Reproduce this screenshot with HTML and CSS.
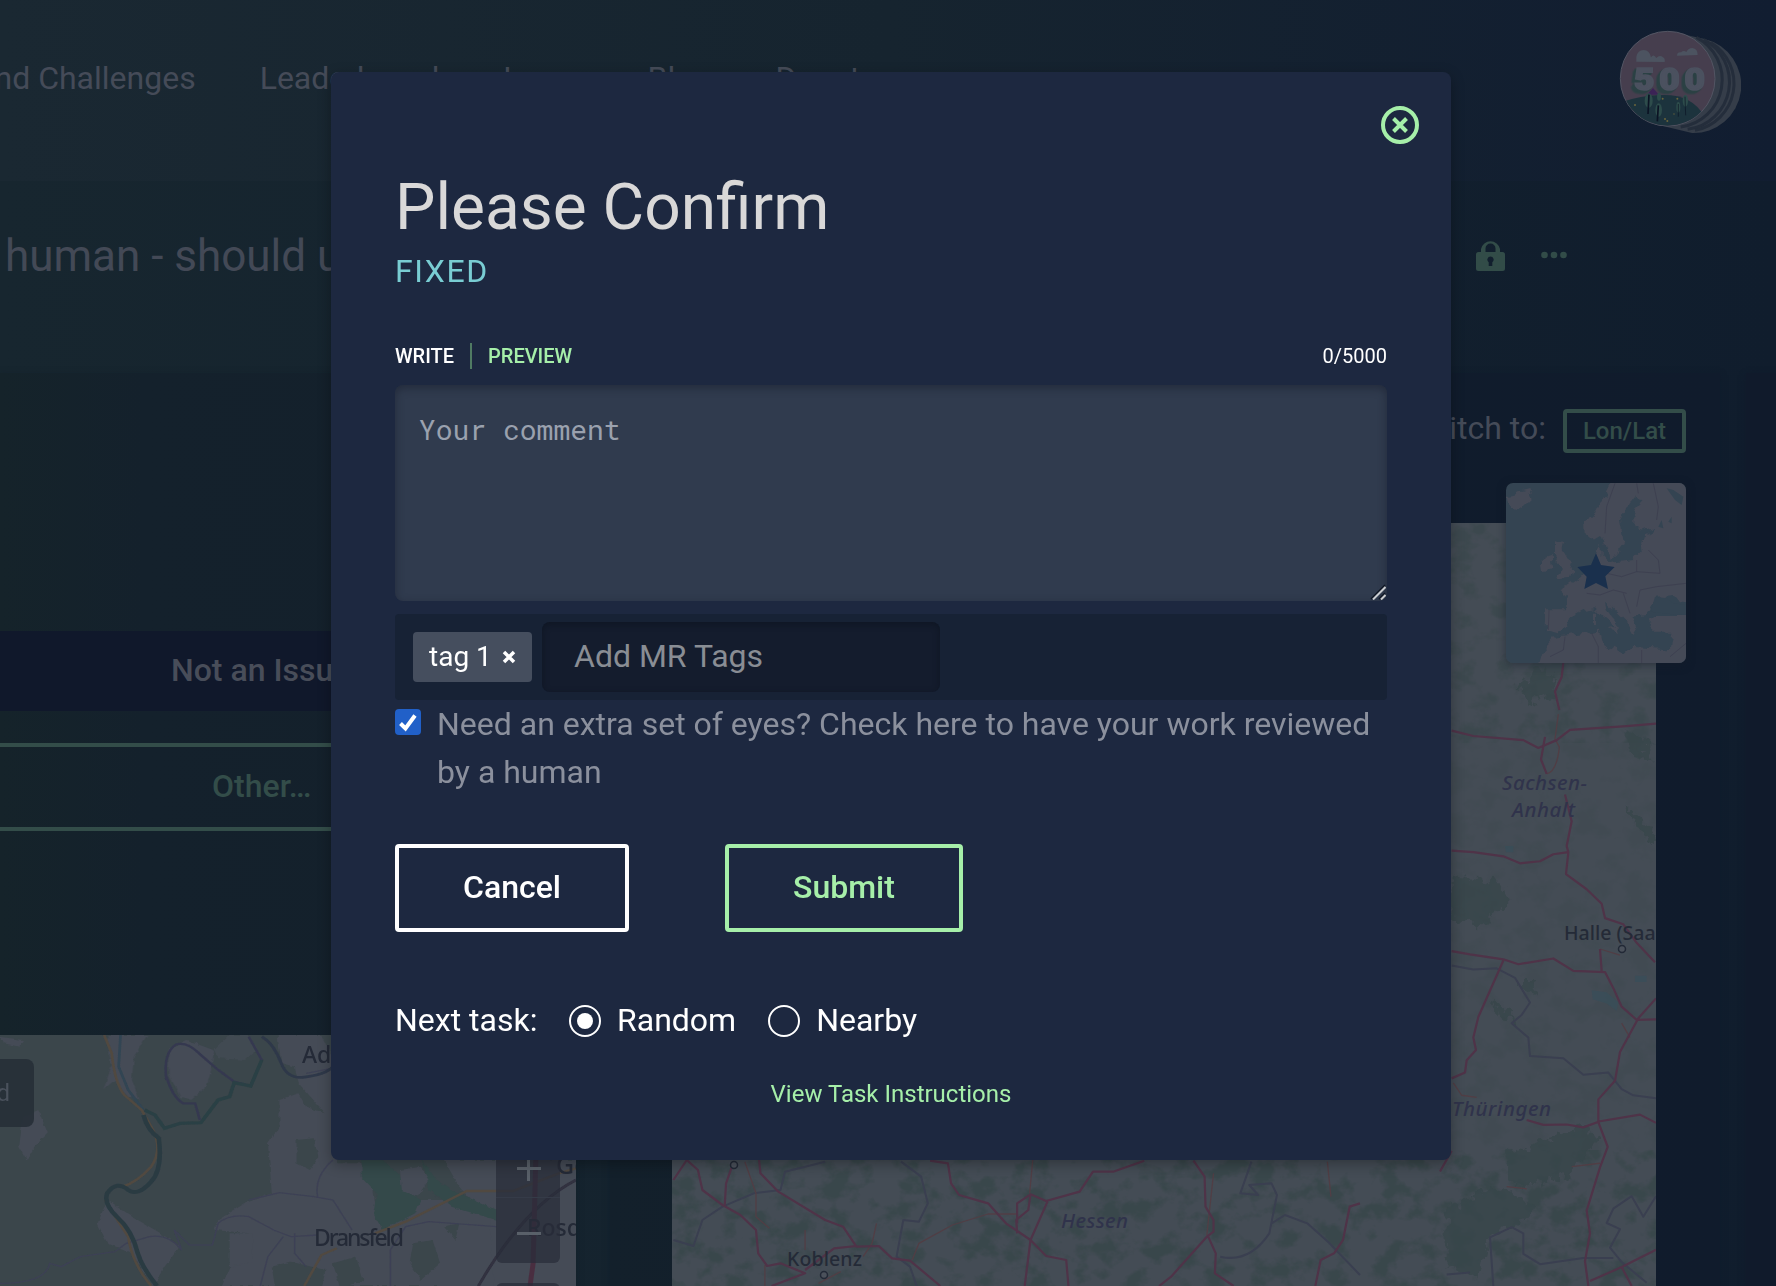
FILE: index.html
```html
<!DOCTYPE html>
<html lang="en">
<head>
<meta charset="utf-8">
<title>Please Confirm</title>
<link rel="stylesheet" href="styles.css">
</head>
<body>
<div class="page">
  <header class="topbar">
    <nav class="nav">
      <a>Find Challenges</a><a>Leaderboard</a><a>Learn</a><a>Blog</a><a>Donate</a>
    </nav>
    <svg class="badge" viewBox="958 90 366 312">
      <defs><clipPath id="disc"><circle cx="1104" cy="236" r="141"/></clipPath></defs>
      <g fill="#353d49">
        <path d="M1104 93L1215 117A143 143 0 0 1 1177 399L1080 376Z"/>
      </g>
      <g fill="none" stroke="#242d3b" stroke-width="9">
        <path d="M1190 112A143 143 0 0 1 1143 381"/>
        <path d="M1212 119A143 143 0 0 1 1164 388"/>
        <path d="M1234 128A143 143 0 0 1 1186 391"/>
      </g>
      <circle cx="1104" cy="236" r="142" fill="#463e4e" stroke="#525563" stroke-width="3"/>
      <g clip-path="url(#disc)">
        <path d="M1042 284L1060 264L1078 284Z" fill="#3b2356"/>
        <path d="M940 400V316Q1010 286 1090 285Q1180 284 1214 350V400Z" fill="#1c333d"/>
        <g fill="#2d4c4b"><ellipse cx="1047" cy="302" rx="12" ry="22"/><ellipse cx="1077" cy="330" rx="10" ry="20"/><ellipse cx="1136" cy="322" rx="6" ry="16"/><ellipse cx="1157" cy="302" rx="8" ry="18"/><ellipse cx="1078" cy="290" rx="6" ry="12"/></g>
        <g stroke="#0b1324" stroke-width="5"><path d="M1048 284L1045 342M1076 316L1073 364"/><path stroke-width="2" d="M1136 312V350M1156 290L1158 346"/></g>
        <g fill="#69643b"><circle cx="1006" cy="315" r="3"/><circle cx="1089" cy="296" r="3"/><circle cx="1133" cy="296" r="3"/><circle cx="1096" cy="357" r="3"/><circle cx="1103" cy="363" r="3"/><circle cx="1123" cy="342" r="2"/></g>
      </g>
      <g fill="#4c5360">
        <path d="M1010 185V170Q1014 151 1032 150Q1050 151 1054 172Q1062 160 1070 174Q1080 163 1090 172Q1097 176 1095 186Z"/>
        <path d="M1132 167Q1132 156 1144 157Q1152 149 1160 156Q1166 144 1178 144Q1194 146 1194 165Z"/>
      </g>
      <text class="badge-num" transform="translate(1003 271) scale(1.15 1)" textLength="185">500</text>
    </svg>
  </header>

  <section class="taskbar">
    <h2 class="task-title">human - should use</h2>
    <div class="task-tools">
      <svg class="lock" viewBox="0 0 29 32"><path fill-rule="evenodd" d="M5 13V10a9.700 9.700 0 0 1 19 0v3h2.500a2.500 2.500 0 0 1 2.500 2.500v14a2.500 2.500 0 0 1-2.500 2.500h-24A2.500 2.500 0 0 1 0 29.500v-14A2.500 2.500 0 0 1 2.500 13ZM9.500 13h10v-3.500a5 5 0 0 0-10 0ZM14.500 17.500a3.200 3.200 0 0 0-1.800 5.800v3.700h3.600v-3.700a3.200 3.200 0 0 0-1.800-5.800Z"/></svg>
      <svg class="dots" viewBox="0 0 26 8"><circle cx="3.500" cy="4" r="3.300"/><circle cx="13" cy="4" r="3.300"/><circle cx="22.500" cy="4" r="3.300"/></svg>
    </div>
  </section>

  <main class="columns">
    <div class="col-left">
      <div class="controls">
        <div class="btn-solid">Not an Issue</div>
        <div class="btn-outline">Other…</div>
      </div>
      <div class="map-left">
        <svg class="map-svg" viewBox="0 1035 576 251">
          <defs>
            <filter id="soft"><feGaussianBlur stdDeviation="0.8"/></filter>
            <filter id="ragged" color-interpolation-filters="sRGB"><feTurbulence type="fractalNoise" baseFrequency=".06" numOctaves="2" seed="3"/><feDisplacementMap in="SourceGraphic" xChannelSelector="R" yChannelSelector="G" scale="12"/><feGaussianBlur stdDeviation="0.7"/></filter>
          </defs>
          <rect y="1035" width="576" height="251" fill="#3b464b"/>
          <g transform="translate(0 1000) scale(.3827 .33333)" filter="url(#ragged)">
            <g fill="#454b56">
              <path d="M280 105H385L350 170L345 240L365 300L330 290L300 240L270 270L290 200Z"/>
              <path d="M440 150L490 120L560 150L550 220L540 260L500 300L470 290L440 220Z"/>
              <path d="M560 150L600 105H650L670 150L640 180L570 175Z" opacity=".7"/>
              <path d="M725 105H840L880 200V490H950L975 560L985 660L1005 690L1100 600L1160 600L1297 650V858H580L600 800L640 760L650 700L560 690L570 660L640 610L710 580L705 500L700 430L730 380V300L780 280L800 320L850 340L780 250L770 200L735 190Z"/>
              <path d="M0 110L60 120L50 140L10 130ZM60 350L100 330L125 400L90 440L70 480L50 440ZM280 600L330 640L420 700L470 740L430 800L400 858L345 760L280 730L255 670Z"/>
              <path d="M1160 480H1520V870H1290L1280 650L1230 600L1200 560Z"/>
              <path d="M600 700L660 700V790L600 800Z"/>
            </g>
            <g fill="#3b464b"><path d="M775 420L820 415L832 470L810 510L775 490ZM710 800L760 785L850 810L840 870H720ZM870 790L930 770L950 840L890 870ZM1080 730L1130 720L1150 790L1100 840L1070 790ZM1160 680L1200 670L1190 720Z"/></g>
            <g fill="#34494a"><path d="M945 480H1000L1040 520L1070 580L1100 600L1085 640L1000 690L975 640L985 580L945 530Z"/><path d="M1105 480L1140 540L1180 570L1297 630V660L1180 620L1120 570Z"/></g>
            <path fill="#454b56" d="M1045 510L1100 500L1120 540L1090 590L1050 570Z"/>
          </g>
          <g transform="translate(0 1000) scale(.3827 .33333)" filter="url(#soft)">
            <path d="M435 240Q425 160 460 133Q490 125 520 160L570 210L612 245L655 258L684 180L650 110M435 230Q450 290 478 310H510L522 360" stroke="#353950" stroke-width="7" fill="none"/>
            <path d="M0 850Q120 850 130 790L160 800L210 770L300 755L330 730L390 710Q440 700 475 750L455 690L495 735L555 735L570 670Q600 640 650 650L715 690L760 710L830 705M650 600L730 578L820 590L870 600L920 690M830 590Q820 530 870 480M770 700V760L800 800M680 858L700 770L740 710M1020 858V750L1060 680L1120 665L1297 680M890 200L800 220" class="r-violet"/>
            <path d="M315 105L310 200L335 270L375 330" stroke="#314553" stroke-width="7" fill="none"/>
            <path d="M684 110Q715 130 735 190Q750 235 790 232Q850 225 870 200" stroke="#2f3849" stroke-width="8" fill="none"/>
            <path d="M684 180L655 258L612 248L600 290L570 300L525 368L470 370L430 385L405 345L378 330" stroke="#2b4044" stroke-width="10" fill="none"/>
            <path d="M272 105L292 160Q300 250 325 285L370 330L400 390Q425 450 395 500Q360 545 320 560M275 600Q300 650 335 710Q345 790 395 858M795 858L840 765L880 745M980 700L1060 665L1220 573H1340L1460 520L1505 505" stroke="#514940" stroke-width="7" fill="none"/>
            <path d="M375 345Q385 390 415 415Q425 510 395 545Q360 590 335 570Q305 540 280 580Q270 610 305 650Q345 690 360 760Q370 800 410 858" stroke="#2a3b43" stroke-width="12" fill="none"/>
            <path d="M1250 858Q1370 620 1505 540" stroke="#30303f" stroke-width="8" fill="none"/>
            <path d="M1400 480L1393 790L1385 858" stroke="#4a2f41" stroke-width="13" fill="none"/>
          </g>
          <g class="town" font-size="23">
            <text x="302" y="1063">Adelebsen</text>
            <text x="302" y="1246" textLength="102" visibility="hidden"></text>
            <text x="314" y="1246" textLength="90">Dransfeld</text>
            <text x="556" y="1174" font-size="25">Göttingen</text>
            <text x="527" y="1236">Rosdorf</text>
          </g>
        </svg>
        <div class="map-chip">d</div>
        <div class="zoom-box"><span class="zoom-btn plus"></span><span class="zoom-btn"></span></div>
        <div class="zoom-box zoom-box-next"></div>
      </div>
    </div>

    <div class="col-right">
      <div class="switch-row"><span>Switch to:</span><span class="lonlat">Lon/Lat</span></div>
      <div class="map-right">
        <svg class="map-svg" viewBox="672 523 984 763">
          <defs>
            <filter id="woods" x="0" y="0" width="100%" height="100%" color-interpolation-filters="sRGB">
              <feTurbulence type="fractalNoise" baseFrequency="0.04 0.05" numOctaves="4" seed="8"/>
              <feColorMatrix values="0 0 0 0 .215  0 0 0 0 .275  0 0 0 0 .286  0 5 0 0 -2.400"/>
            </filter>
            <filter id="patch" color-interpolation-filters="sRGB"><feTurbulence type="fractalNoise" baseFrequency=".04" numOctaves="3" seed="5"/><feDisplacementMap in="SourceGraphic" xChannelSelector="R" yChannelSelector="G" scale="50"/><feGaussianBlur stdDeviation="1.500"/></filter>
          </defs>
          <rect x="672" y="523" width="984" height="763" fill="#444c55"/>
          <rect x="672" y="1150" width="984" height="136" filter="url(#woods)" opacity=".8"/>
          <rect x="1440" y="523" width="216" height="220" filter="url(#woods)" opacity=".55"/>
          <rect x="1440" y="743" width="216" height="407" filter="url(#woods)" opacity=".22"/>
          <g transform="translate(1440 640) scale(.33333 .412)" fill="none">
            <path filter="url(#patch)" fill="#374649" fill-opacity=".75" d="M35 570L190 590L210 640L120 690L35 680ZM230 110L300 70L350 90L340 140L270 150ZM190 1250L420 1180L480 1210L380 1300L230 1330ZM20 1380L150 1330L290 1370L240 1420L150 1440L120 1540L20 1520ZM240 830L290 830L280 870ZM150 880L210 900L230 930L190 920ZM560 220L640 250L640 290L560 270ZM560 400L640 470V490L580 450Z"/>
            <path fill="#374f5a" d="M455 850L500 855L535 880L530 900L500 882L458 872ZM195 500H220V515H198ZM585 815H620V830H585Z" opacity=".7"/>
            <g class="r-state"><path d="M35 790L100 800L170 797L225 820L270 880L245 910L215 930L265 965L270 1010L370 1015L430 1055L505 1050L545 1090L580 1105L648 1112M648 1350L610 1400L575 1350L520 1380L500 1415L540 1430L510 1475L545 1510L620 1560M20 1540L90 1535M160 1568L150 1450L215 1425L250 1440L250 1490L300 1515L430 1500L520 1500"/></g>
            <g class="r-orange"><path d="M355 180L345 240L358 260Q350 320 320 325M545 930L570 965M480 750L540 765M40 1075L65 1105L110 1110M395 1278L480 1270M200 1327L260 1332"/></g>
            <g class="r-red">
              <path d="M370 55L365 90L345 125L358 170"/>
              <path d="M35 220L100 233L250 243L295 262L350 243L390 218L470 214L560 209L648 203"/>
              <path d="M315 235L303 290L320 325M375 375L395 440L380 500L385 515L340 520L300 537L240 542L190 525L100 515L35 511M385 515L378 568L440 605L485 640L495 675L550 690L590 735L645 782"/>
              <path d="M35 755L90 763L190 775L235 787L340 773L400 803L495 806L520 845L545 890L590 922L648 921M648 870L595 918L540 1000L525 1070L475 1115L475 1170L503 1230L480 1280L440 1385L450 1440L435 1508L445 1568M190 778L115 915L100 965L108 995L80 1020L75 1050L35 1064M485 803L480 750M260 1165L310 1177L380 1176L430 1183L480 1168L600 1152L648 1172M648 1480L545 1522L450 1556M545 1522L575 1568M0 1290L35 1240"/>
            </g>
          </g>
          <g transform="translate(660 1140) scale(.4464 .33333)" fill="none">
            <g class="r-state"><path d="M30 300L75 318L95 240L140 200L210 160L270 150L280 95L370 65M540 65L585 110L600 190L580 245L545 240L530 350L560 380L575 438M1325 65L1300 160L1340 165L1320 135L1370 130L1382 165L1365 280Q1320 370 1255 350M1370 250L1400 225L1450 250L1500 310L1568 405"/></g>
            <g class="r-orange"><path d="M835 60L828 160M800 222L735 222L655 255L580 310L565 360M190 65L215 160V230L245 265M325 270V330M485 250L475 310L455 350M235 438L235 375M355 430L405 395M1240 100L1225 285M1495 65L1503 170"/></g>
            <g class="r-red">
              <path d="M30 120L60 60L85 90L95 150L140 195L180 225L215 270L220 340L240 378L270 370L325 400L250 438M165 65L148 130L145 195M222 60L225 100L265 155L370 240L410 260L440 320L490 318L520 355L560 362L628 438M325 390L390 325L440 318"/>
              <path d="M605 62L645 70L652 130L670 165L735 190L775 250L830 300L865 348L910 360L915 438M1085 62L1015 95L970 95L940 155L865 183L830 163L800 190V250M830 163L825 210L798 240L800 280M868 185L830 300L817 438M1195 62L1220 110L1222 200L1240 240V275L1225 290L1145 410L1118 438M1228 290L1245 340L1243 400L1285 438M1568 190L1545 200L1530 300L1510 340L1480 360L1468 438"/>
            </g>
          </g>
          <circle cx="734" cy="1165" r="3.500" class="dot"/><circle cx="824" cy="1275" r="3.500" class="dot"/><circle cx="1622" cy="949" r="3.500" class="dot"/>
          <g class="state" font-size="20.500">
            <text x="1502" y="790" textLength="85">Sachsen-</text>
            <text x="1512" y="817" textLength="63">Anhalt</text>
            <text x="1452" y="1116" textLength="99">Thüringen</text>
            <text x="1061" y="1228" textLength="67">Hessen</text>
          </g>
          <g class="town" font-size="19.500">
            <text x="1564" y="940">Halle (Saale)</text>
            <text x="787" y="1266" textLength="75">Koblenz</text>
          </g>
        </svg>
        <div class="minimap">
          <svg class="map-svg" viewBox="198 369 540 540">
            <defs><filter id="coast" color-interpolation-filters="sRGB"><feTurbulence type="fractalNoise" baseFrequency=".035" numOctaves="2" seed="3"/><feDisplacementMap in="SourceGraphic" xChannelSelector="R" yChannelSelector="G" scale="30"/><feGaussianBlur stdDeviation="1.500"/></filter></defs>
            <rect x="198" y="369" width="540" height="540" fill="#344452"/>
            <g fill="#454a57" filter="url(#coast)">
              <path d="M203 405L245 395L265 390L275 415L240 450L210 440Z"/>
              <path d="M520 350L490 410L465 460L435 480L437 520L460 540L485 525L497 560L510 600L535 580L550 540L540 480L570 430L585 410L607 415L580 470L580 505L610 512L640 500L620 530L600 545L605 575L580 600L540 605L500 610L482 590V555L463 570L470 610L440 630L415 655L380 680L352 690L380 715L378 745L315 745L318 810L350 820L385 800L395 770L430 750L465 745L490 770L520 795L540 800L500 750L495 725L530 760L560 790L580 825L595 800L580 770L620 765L640 730L650 710L700 705L720 730L770 735V350Z"/>
              <path d="M345 540L370 545L365 570L400 630L395 650L350 655L365 625L345 590ZM305 600L335 590L340 625L310 640Z"/>
              <path d="M620 780L650 765L770 765V940H290L310 870L345 830L480 812L490 850L550 880L570 860L690 868L697 815H640Z"/>
              <path d="M462 755H474V795H462ZM500 800L540 797L530 812Z"/>
            </g>
            <g fill="#344452"><path d="M680 385L700 390L730 410L725 435L705 420ZM655 500L665 480L670 505ZM685 485L695 470V490ZM632 755L645 710L680 715L700 730L738 735V765L690 762Z"/></g>
            <g fill="none" stroke="#3c3f4f" stroke-width="2.500"><path d="M525 370L500 440L495 520M590 370L595 400M640 370L655 440L650 480M590 600L590 635L545 650L500 640M590 635L660 640L655 600L625 570M600 690L650 680L738 670M440 700L480 705L520 690L560 700M550 700L570 760M600 690L590 740M327 750L325 810M375 830L370 870L330 890M455 820L475 860V909M605 870V909M690 890L738 850"/></g>
            <path fill="#1a304d" d="M468 580L483 615L524 621L496 649L504 687L468 669L433 687L440 650L412 621L453 615Z"/>
          </svg>
        </div>
      </div>
    </div>
    <div class="col-edge"></div>
  </main>
</div>

<div class="modal">
  <svg class="close" viewBox="0 0 38 38"><circle cx="19" cy="19" r="17"/><path d="M12.500 12.500L25.500 25.500M25.500 12.500L12.500 25.500"/></svg>
  <h1 class="title">Please Confirm</h1>
  <div class="status">Fixed</div>
  <div class="tabs"><span class="tab">Write</span><span class="tab tab-link">Preview</span><span class="count">0/5000</span></div>
  <div class="comment">Your comment
    <svg class="grip" viewBox="0 0 16 16"><path class="grip-dark" d="M1 15L15 1M9 15L15 9"/><path class="grip-light" d="M3 15.500L15.500 3M11 15.500L15.500 11"/></svg>
  </div>
  <div class="tags">
    <span class="tag">tag 1 <svg viewBox="0 0 14 14"><path d="M2 2L12 12M12 2L2 12"/></svg></span>
    <span class="tag-input">Add MR Tags</span>
  </div>
  <div class="review">
    <span class="check"><svg viewBox="0 0 26 26"><path d="M5.500 14.500L10.500 19.500L20 6.500"/></svg></span>
    <p>Need an extra set of eyes? Check here to have your work reviewed by a human</p>
  </div>
  <div class="actions"><span class="btn">Cancel</span><span class="btn btn-green">Submit</span></div>
  <div class="next"><span class="next-label">Next task:</span><span class="radio radio-on"></span><span class="opt">Random</span><span class="radio"></span><span class="opt">Nearby</span></div>
  <a class="instructions">View Task Instructions</a>
</div>
</body>
</html>
```
FILE: styles.css
```css
* { box-sizing: border-box; }
html, body { margin: 0; height: 1286px; overflow: hidden; }
body { font-family: Roboto, "Liberation Sans", sans-serif; font-size: 32px; position: relative; background: #101c2c; }
h1, h2, p { margin: 0; font-weight: 400; }
svg { display: block; }

.page { height: 1286px; display: flex; flex-direction: column; overflow: hidden; background: linear-gradient(90deg, #17262f 0, #14222e 50%, #101d2d 100%); }
.topbar { height: 181px; flex: none; display: flex; justify-content: space-between; background: linear-gradient(90deg, #1a2832 0, #16242f 50%, #111d31 100%); }
.nav { display: flex; gap: 64px; margin-left: -31px; padding-top: 59px; line-height: 38px; color: #454b58; white-space: nowrap; }
.badge { width: 122px; height: 104px; margin: 30px 35px 0 0; }
.badge-num { font: 900 92px Roboto, sans-serif; fill: #4b515f; stroke: #4b515f; stroke-width: 5; filter: drop-shadow(-5px 5px 0 #2b4144) drop-shadow(-4px 5px 0 #2b4144); }

.taskbar { height: 192px; flex: none; display: flex; justify-content: space-between; padding: 49px 209px 0 5px; }
.task-title { font-size: 44px; line-height: 52px; color: #434956; white-space: nowrap; }
.task-tools { display: flex; align-items: center; gap: 36px; height: 50px; fill: #324c48; }
.lock { width: 29px; height: 32px; }
.dots { width: 26px; height: 8px; }

.columns { flex: 1; display: flex; }
.col-left { width: 576px; margin-right: 34px; display: flex; flex-direction: column; background: linear-gradient(90deg, #15232a 0, #14212c 25%, #14202b 100%); box-shadow: 0 2px 6px rgba(15, 27, 38, .5); }
.controls { height: 662px; padding-top: 258px; display: flex; flex-direction: column; gap: 32px; font-weight: 500; }
.btn-solid { height: 80px; line-height: 79px; background: #10182b; color: #484d59; padding-left: 171px; }
.btn-outline { height: 88px; line-height: 79px; border: solid #334d49; border-width: 4px 0; color: #334d49; padding-left: 212px; }
.map-left { position: relative; height: 251px; overflow: hidden; }
.map-svg { width: 100%; height: 100%; }
.map-chip { position: absolute; left: 0; top: 24px; width: 34px; height: 68px; border-radius: 0 8px 8px 0; background: rgba(39, 47, 56, .93); color: #4a515c; font-size: 24px; line-height: 68px; padding-right: 24px; display: flex; justify-content: flex-end; }
.zoom-box { position: absolute; left: 496px; top: 98px; width: 64px; height: 130px; border-radius: 6px; background: rgba(40, 45, 57, .72); display: flex; flex-direction: column; }
.zoom-box-next { top: 248px; }
.zoom-btn { height: 65px; display: flex; align-items: center; justify-content: center; padding-left: 2px; position: relative; border-bottom: 1px solid #353b48; }
.zoom-btn + .zoom-btn { border: 0; }
.zoom-btn::before { content: ""; width: 24px; height: 3px; background: #596069; margin-top: 6px; }
.plus::after { content: ""; position: absolute; width: 3px; height: 24px; background: #596069; top: 24px; left: 31px; }

.col-right { width: 1110px; background: linear-gradient(90deg, #13202b, #101c2c 60%, #101b2c 100%); box-shadow: 0 2px 6px rgba(15, 27, 42, .6); display: flex; flex-direction: column; padding: 36px 34px 0 62px; }
.switch-row { display: flex; justify-content: flex-end; align-items: center; gap: 17px; height: 44px; color: #454b58; line-height: 40px; }
.switch-row > :first-child { padding-bottom: 6px; }
.lonlat { height: 44px; width: 123px; border: 4px solid #334d49; border-radius: 4px; color: #334d49; font-size: 24px; font-weight: 500; line-height: 36px; text-align: center; }
.map-right { position: relative; width: 984px; height: 763px; margin-top: 70px; flex: none; }
.minimap { position: absolute; left: 834px; top: -40px; width: 180px; height: 180px; border-radius: 7px; overflow: hidden; box-shadow: 0 2px 8px rgba(20, 28, 40, .5); }
.col-edge { margin-left: 26px; flex: 1; background: #101a2b; box-shadow: 0 2px 6px #101a2b; }

.r-violet { fill: none; stroke: #3d4154; stroke-width: 4; }
.r-red path, .r-orange path, .r-state path { vector-effect: non-scaling-stroke; fill: none; stroke-linejoin: round; }
.r-red path { stroke: #4f3348; stroke-width: 2.2; }
.r-orange path { stroke: #513e45; stroke-width: 1.3; }
.r-state path { stroke: #3a3f50; stroke-width: 2; }
.dot { fill: #4b515b; stroke: #222936; stroke-width: 1.500; }
.town { font-family: "Noto Sans", sans-serif; font-weight: 500; fill: #242a37; }
.state { font-family: "Noto Sans", sans-serif; font-style: italic; font-weight: 500; fill: #30334b; }

.modal { position: absolute; left: 331px; top: 72px; width: 1120px; height: 1088px; padding: 100px 64px 0; border-radius: 8px; background: #1d2840; box-shadow: 0 4px 14px rgba(0, 0, 0, .3); color: #fff; display: flex; flex-direction: column; }
.close { position: absolute; right: 32px; top: 34px; width: 38px; height: 38px; fill: none; stroke: #a6efa9; stroke-width: 4; }
.title { font-size: 64px; line-height: 72px; color: #d9d8d8; }
.status { margin-top: 7px; font-size: 32px; line-height: 40px; letter-spacing: 1.600px; text-transform: uppercase; color: #79cdd3; }
.tabs { display: flex; align-items: center; height: 26px; margin-top: 52px; font-size: 20px; font-weight: 500; text-transform: uppercase; }
.tab-link { color: #a6efa9; border-left: 2px solid #507b63; line-height: 26px; padding-left: 16px; margin-left: 16px; }
.count { margin-left: auto; font-weight: 400; }
.comment { position: relative; height: 216px; margin-top: 16px; padding: 26px 24px; border-radius: 8px; background: #303b4e; box-shadow: inset 0 3px 8px rgba(24, 30, 44, .55); color: #9aa1ae; font-family: "Roboto Mono", "Liberation Mono", monospace; font-size: 28px; line-height: 38px; }
.grip { position: absolute; right: 1px; bottom: 1px; width: 16px; height: 16px; fill: none; }
.grip-dark { stroke: #0e1522; stroke-width: 1.500; }
.grip-light { stroke: #c9ccd0; stroke-width: 2; }
.tags { height: 86px; margin-top: 13px; padding: 8px 18px; display: flex; align-items: center; border-radius: 4px; background: #172235; }
.tag { width: 119px; height: 50px; padding-left: 16px; display: flex; align-items: center; gap: 10px; border-radius: 4px; background: #454e5e; font-size: 28px; line-height: 50px; }
.tag svg { width: 14px; height: 14px; fill: none; stroke: #fff; stroke-width: 3.500; }
.tag-input { width: 398px; height: 70px; margin-left: 10px; padding-left: 32px; border-radius: 8px; background: #141c2d; box-shadow: inset 0 2px 6px rgba(10, 15, 26, .5); color: #898d94; line-height: 69px; }
.review { display: flex; gap: 16px; margin-top: 0; color: #8b909d; line-height: 48px; }
.check { flex: none; width: 26px; height: 26px; margin-top: 9px; border-radius: 4px; background: #2160c8; }
.check svg { fill: none; stroke: #fff; stroke-width: 4; }
.actions { display: flex; gap: 96px; margin-top: 48px; font-weight: 500; }
.btn { width: 234px; height: 88px; border: 4px solid #fff; border-radius: 4px; line-height: 79px; text-align: center; }
.btn-green { width: 238px; border-color: #a6efa9; color: #a6efa9; }
.next { display: flex; align-items: center; margin-top: 69px; height: 40px; line-height: 40px; }
.next-label { width: 174px; }
.next-label, .opt { padding-bottom: 2px; }
.radio { width: 32px; height: 32px; border: 2px solid #fff; border-radius: 50%; margin-right: 16px; display: flex; align-items: center; justify-content: center; }
.radio-on::after { content: ""; width: 16px; height: 16px; border-radius: 50%; background: #fff; }
.opt { margin-right: 32px; }
.instructions { margin-top: 38px; text-align: center; font-size: 24px; line-height: 30px; color: #a6efa9; }
```
